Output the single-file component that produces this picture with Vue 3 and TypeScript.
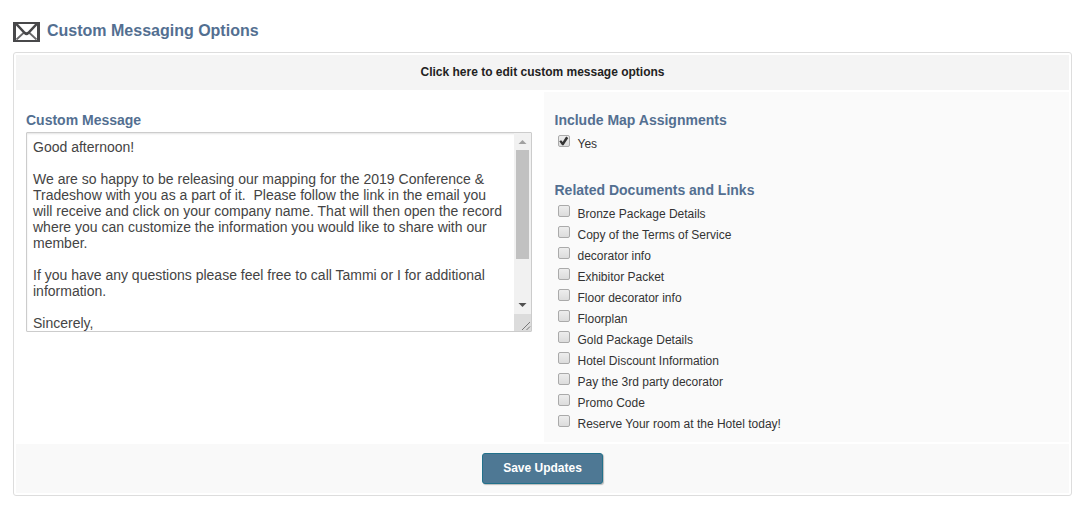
<script setup lang="ts">
import { ref } from 'vue'

interface DocumentOption {
  id: string
  label: string
  checked: boolean
}

const message = ref(`Good afternoon!

We are so happy to be releasing our mapping for the 2019 Conference & Tradeshow with you as a part of it.  Please follow the link in the email you will receive and click on your company name. That will then open the record where you can customize the information you would like to share with our member.

If you have any questions please feel free to call Tammi or I for additional information.

Sincerely,`)

const includeMap = ref(true)

const documents = ref<DocumentOption[]>(
  [
    'Bronze Package Details',
    'Copy of the Terms of Service',
    'decorator info',
    'Exhibitor Packet',
    'Floor decorator info',
    'Floorplan',
    'Gold Package Details',
    'Hotel Discount Information',
    'Pay the 3rd party decorator',
    'Promo Code',
    'Reserve Your room at the Hotel today!',
  ].map((label, i) => ({ id: `doc-${i}`, label, checked: false })),
)
</script>

<template>
  <main class="page">
    <header class="title">
      <svg class="mail" viewBox="0 0 27 20" aria-hidden="true">
        <rect width="27" height="20" fill="#48484a" />
        <rect x="3" y="2" width="21" height="16" fill="#fff" />
        <path d="M3.5 17.5 L11 10.5 M23.5 17.5 L16 10.5" fill="none" stroke="#69696b" stroke-width="1.8" />
        <path d="M3 2 L5 2 L12 9.5 Q13.5 11 15 9.5 L22 2 L24 2 L24 3.5 L16 12 Q13.5 14.5 11 12 L3 3.5 Z" fill="#48484a" />
      </svg>
      <h1>Custom Messaging Options</h1>
    </header>

    <form class="panel" @submit.prevent>
      <button type="button" class="toggle">Click here to edit custom message options</button>

      <section class="cell message">
        <label class="heading" for="message">Custom Message</label>
        <div class="editor">
          <textarea id="message" v-model="message" spellcheck="false"></textarea>
          <div class="scroll" aria-hidden="true">
            <svg class="arrow" viewBox="0 0 17 17"><path d="M4.5 11 L8.5 7 L12.5 11 Z" fill="#a0a0a0" /></svg>
            <div class="track"><div class="thumb"></div></div>
            <svg class="arrow" viewBox="0 0 17 17"><path d="M4.5 6 L8.5 10 L12.5 6 Z" fill="#505050" /></svg>
            <svg class="arrow corner" viewBox="0 0 17 17">
              <path d="M8 16 L16 8 M12.5 16 L16 12.5" stroke="#777" fill="none" />
            </svg>
          </div>
        </div>
      </section>

      <section class="cell options">
        <h2 class="heading">Include Map Assignments</h2>
        <div class="choices">
          <div class="choice">
            <input id="include-map" v-model="includeMap" type="checkbox" />
            <label for="include-map">Yes</label>
          </div>
        </div>

        <h2 class="heading related">Related Documents and Links</h2>
        <div class="choices">
          <div v-for="doc in documents" :key="doc.id" class="choice">
            <input :id="doc.id" v-model="doc.checked" type="checkbox" />
            <label :for="doc.id">{{ doc.label }}</label>
          </div>
        </div>
      </section>

      <footer class="actions">
        <button type="submit" class="save">Save Updates</button>
      </footer>
    </form>
  </main>
</template>

<style>
body {
  background: #fff;
}
</style>

<style scoped>
.page {
  padding: 20px 13px 16px;
  font-family: "Liberation Sans", Arial, sans-serif;
  font-size: 12px;
  color: #333;
}

.title {
  display: flex;
  align-items: flex-start;
  gap: 7px;
  height: 32px;
}

.mail {
  width: 27px;
  height: 20px;
  margin-top: 2px;
}

h1 {
  margin: 0;
  font-size: 16px;
  line-height: 22px;
  color: #536f91;
}

.panel {
  display: grid;
  grid-template-columns: 1fr 1fr;
  gap: 2px;
  padding: 2px;
  border: 1px solid #ddd;
  border-radius: 3px;
}

.toggle {
  grid-column: 1 / -1;
  height: 35px;
  padding: 0 0 2px;
  border: 0;
  background: #f4f4f4;
  color: #222;
  font: bold 12px "Liberation Sans", Arial, sans-serif;
  cursor: pointer;
}

.cell {
  min-width: 0;
  padding: 20px 10px 8px;
}

.options {
  padding-left: 11px;
  background: #fafafa;
}

.heading {
  display: block;
  margin: 0;
  font-size: 14px;
  font-weight: bold;
  line-height: 16px;
  color: #536f91;
}

.related {
  margin-top: 28px;
}

.editor {
  display: flex;
  height: 198px;
  margin-top: 4px;
  border: 1px solid #ccc;
  border-radius: 1px;
  box-shadow: inset 0 1px 2px #e4e4e4;
}

textarea {
  flex: 1;
  min-width: 0;
  margin: 0;
  padding: 6px 6px 0;
  border: 0;
  outline: 0;
  resize: none;
  overflow: hidden;
  background: transparent;
  color: #444;
  font: 14px/16px "Liberation Sans", Arial, sans-serif;
}

.scroll {
  display: flex;
  flex-direction: column;
  width: 17px;
  background: #f1f1f1;
}

.arrow {
  width: 17px;
  height: 17px;
}

.track {
  flex: 1;
  padding: 0 2px;
}

.thumb {
  height: 74%;
  background: #c1c1c1;
}

.corner {
  background: #dcdcdc;
}

.choices {
  margin-top: 5px;
}

.choice {
  display: flex;
  align-items: flex-start;
  gap: 8px;
  height: 21px;
  padding-left: 3px;
}

.choice label {
  margin-top: 1px;
  line-height: 21px;
}

.choice input {
  appearance: none;
  width: 12px;
  height: 12px;
  margin: 2px 0 0;
  border: 1px solid #aaa;
  border-radius: 2px;
  background: linear-gradient(#ededed, #dcdcdc);
}

.choice input:checked {
  display: grid;
  place-items: center;
}

.choice input:checked::before {
  content: "";
  width: 10px;
  height: 10px;
  background: #333;
  clip-path: polygon(8% 52%, 26% 42%, 42% 60%, 76% 6%, 98% 20%, 50% 92%, 36% 92%);
}

.actions {
  grid-column: 1 / -1;
  display: flex;
  justify-content: center;
  padding: 9px 0;
  background: #f9f9f9;
}

.save {
  height: 31px;
  padding: 0 20px 1px;
  border: 1px solid #22718b;
  border-radius: 3px;
  background: #4e7894;
  box-shadow: 1px 1px 1px #bbb;
  color: #fff;
  font: bold 12px "Liberation Sans", Arial, sans-serif;
  cursor: pointer;
}
</style>
